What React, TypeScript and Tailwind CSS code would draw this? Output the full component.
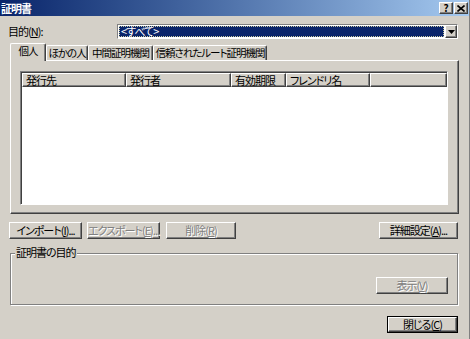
import React from 'react';

const raised =
  'border border-t-white border-l-white border-r-[#404040] border-b-[#404040] shadow-[inset_-1px_-1px_0_#808080]';
const disabledText = 'text-[#808080] [text-shadow:1px_1px_0_#fff]';

const Btn = ({ label, width, disabled, isDefault }: { label: React.ReactNode; width: string; disabled?: boolean; isDefault?: boolean }) => (
  <div className={`${width} h-[17px] flex ${isDefault ? 'border border-black' : ''}`}>
    <div className={`flex-1 flex items-center justify-center whitespace-nowrap bg-[#d4d0c8] ${raised} ${disabled ? disabledText : ''}`}>
      {label}
    </div>
  </div>
);

const tabs = [
  { label: '個人', w: 'w-[36px]', active: true },
  { label: 'ほかの人', w: 'w-[42px]' },
  { label: '中間証明機関', w: 'w-[65px]' },
  { label: '信頼されたルート証明機関', w: 'w-[114px]' },
];

const cols = [
  { label: '発行先', w: 'w-[104px]' },
  { label: '発行者', w: 'w-[105px]' },
  { label: '有効期限', w: 'w-[55px]' },
  { label: 'フレンドリ名', w: 'w-[84px]' },
  { label: '', w: 'flex-1' },
];

export default function App() {
  return (
    <div
      className="w-[470px] h-[339px] bg-[#d4d0c8] flex flex-col text-[11px] tracking-[-1px] leading-none text-black overflow-hidden border-r border-r-[#808080] [font-feature-settings:'palt'] whitespace-nowrap"
      style={{ fontFamily: '"Noto Sans CJK JP", "Liberation Sans", sans-serif' }}
    >
      {/* title bar */}
      <div className="h-[16px] flex items-center bg-gradient-to-r from-[#0a246a] to-[#a6caf0] pl-[1px] pr-[1px]">
        <span className="text-white font-bold">証明書</span>
        <div className="ml-auto flex">
          <div className={`w-[14px] h-[12px] bg-[#d4d0c8] ${raised} flex items-center justify-center text-[10px] font-bold tracking-normal`}>?</div>
          <div className={`w-[14px] h-[12px] ml-[1px] bg-[#d4d0c8] ${raised} flex items-center justify-center`}>
            <svg width="8" height="7" viewBox="0 0 8 7">
              <path d="M0.5 0.5 L7.5 6.5 M7.5 0.5 L0.5 6.5" stroke="#000" strokeWidth="1.6" />
            </svg>
          </div>
        </div>
      </div>

      {/* purpose combo */}
      <div className="flex items-center mt-[8px] h-[15px]">
        <span className="ml-[8px] w-[109px]">
          目的(<u>N</u>):
        </span>
        <div className="w-[341px] h-[15px] flex bg-white border border-t-[#808080] border-l-[#808080] border-r-white border-b-white">
          <div className="flex-1 m-[1px] bg-[#0a246a] border border-dotted border-[#c8c8a0] flex items-center pl-[1px] text-white">
            &lt;すべて&gt;
          </div>
          <div className={`w-[12px] bg-[#d4d0c8] ${raised} flex items-center justify-center`}>
            <svg width="7" height="4" viewBox="0 0 7 4">
              <path d="M0 0 H7 L3.5 4 Z" fill="#000" />
            </svg>
          </div>
        </div>
      </div>

      {/* tabs */}
      <div className="flex items-end ml-[10px] mt-[4px] h-[17px] relative z-10 text-[10.5px]">
        {tabs.map(t => (
          <div
            key={t.label}
            className={`${t.w} ${t.active ? 'h-[18px] -mb-[1px] bg-[#d4d0c8] pb-[2px]' : 'h-[15px]'} flex items-center justify-center border-l border-t border-r border-l-white border-t-white border-r-[#404040] rounded-t-[2px] shadow-[inset_-1px_0_0_#808080]`}
          >
            {t.label}
          </div>
        ))}
      </div>

      {/* tab panel */}
      <div className="ml-[10px] w-[449px] h-[154px] border border-t-white border-l-white border-r-[#404040] border-b-[#404040] shadow-[inset_-1px_-1px_0_#808080]">
        <div className="ml-[9px] mt-[10px] w-[428px] h-[134px] bg-white border border-t-[#808080] border-l-[#808080] border-r-white border-b-white shadow-[inset_1px_1px_0_#404040] pl-[1px] pt-[1px]">
          <div className="flex h-[14px]">
            {cols.map((c, i) => (
              <div key={i} className={`${c.w} bg-[#d4d0c8] ${raised} flex items-center pl-[3px]`}>
                {c.label}
              </div>
            ))}
          </div>
        </div>
      </div>

      {/* action buttons */}
      <div className="flex mt-[8px] ml-[9px]">
        <Btn width="w-[73px]" label={<>インポート(<u>I</u>)...</>} />
        <div className="ml-[5px]">
          <Btn width="w-[67px]" disabled label={<>エクスポート(<u>E</u>)...</>} />
        </div>
        <div className="ml-[12px]">
          <Btn width="w-[70px]" disabled label={<>削除(<u>R</u>)</>} />
        </div>
        <div className="ml-auto mr-[11px]">
          <Btn width="w-[79px]" label={<>詳細設定(<u>A</u>)...</>} />
        </div>
      </div>

      {/* purpose group */}
      <div className="relative ml-[10px] mt-[14px] w-[448px] h-[52px] border border-[#808080] shadow-[inset_1px_1px_0_#fff,1px_1px_0_#fff] flex flex-col items-end">
        <span className="absolute -top-[7px] left-[4px] px-[1px] bg-[#d4d0c8]">証明書の目的</span>
        <div className="mt-[23px] mr-[9px]">
          <Btn width="w-[72px]" disabled label={<>表示(<u>V</u>)</>} />
        </div>
      </div>

      {/* close */}
      <div className="flex justify-end mt-[11px] mr-[11px]">
        <Btn width="w-[71px]" isDefault label={<>閉じる(<u>C</u>)</>} />
      </div>
    </div>
  );
}
